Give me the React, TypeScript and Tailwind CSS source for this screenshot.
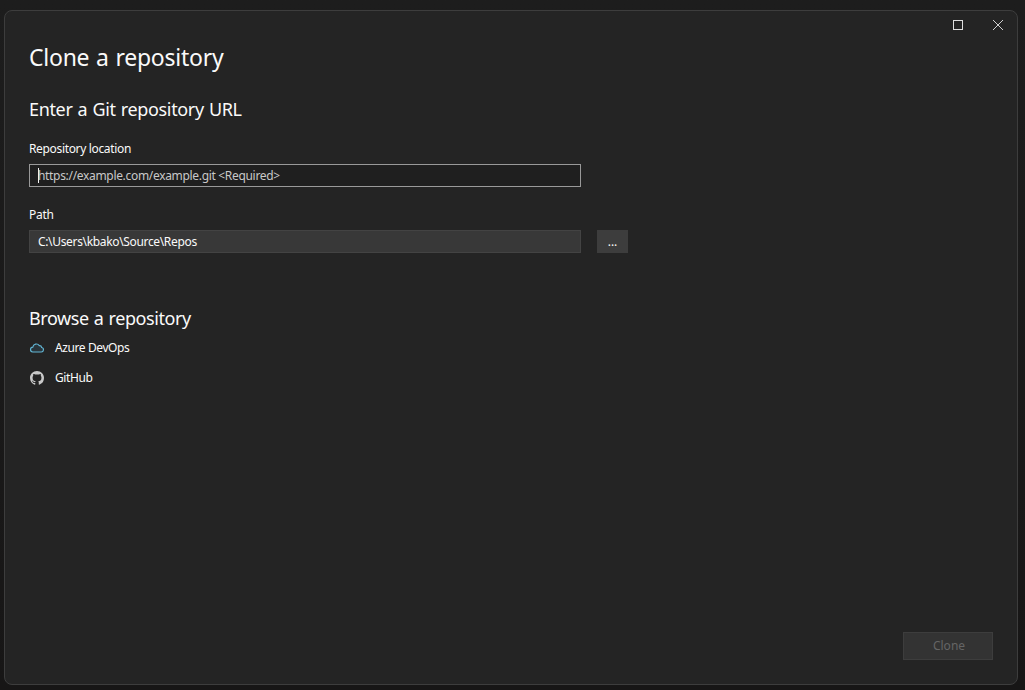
const providers = [
  { key: "azure", label: "Azure DevOps", icon: <CloudIcon /> },
  { key: "github", label: "GitHub", icon: <GitHubIcon /> },
];

function CloudIcon() {
  return (
    <svg width="16" height="16" viewBox="0 0 16 16" fill="none">
      <path
        d="M3.7 12h8.5a2.25 2.25 0 0 0 .5-4.45A2.3 2.3 0 0 0 10.3 5.6 3.6 3.6 0 0 0 3.8 7.1 2.46 2.46 0 0 0 3.7 12Z"
        fill="#29343a"
        stroke="#62b5d3"
        strokeWidth="1.15"
      />
    </svg>
  );
}

function GitHubIcon() {
  return (
    <svg width="16" height="16" viewBox="0 0 16 16" fill="#c8c8c8">
      <g transform="translate(1 1) scale(.875)">
        <path d="M8 0C3.58 0 0 3.58 0 8c0 3.54 2.29 6.53 5.47 7.59.4.07.55-.17.55-.38 0-.19-.01-.82-.01-1.49-2.01.37-2.53-.49-2.69-.94-.09-.23-.48-.94-.82-1.13-.28-.15-.68-.52-.01-.53.63-.01 1.08.58 1.23.82.72 1.21 1.87.87 2.33.66.07-.52.28-.87.51-1.07-1.78-.2-3.64-.89-3.64-3.95 0-.87.31-1.59.82-2.15-.08-.2-.36-1.02.08-2.12 0 0 .67-.21 2.2.82.64-.18 1.32-.27 2-.27s1.36.09 2 .27c1.53-1.04 2.2-.82 2.2-.82.44 1.1.16 1.92.08 2.12.51.56.82 1.27.82 2.15 0 3.07-1.87 3.75-3.65 3.95.29.25.54.73.54 1.48 0 1.07-.01 1.93-.01 2.2 0 .21.15.46.55.38A8.01 8.01 0 0 0 16 8c0-4.42-3.58-8-8-8Z" />
      </g>
    </svg>
  );
}

function WindowControls() {
  return (
    <div className="flex h-7 items-center justify-end gap-[30px] pr-[14px]">
      <button aria-label="Maximize" className="size-[10px] border border-[#dedede]" />
      <button aria-label="Close">
        <svg className="block" width="10" height="10" viewBox="0 0 10 10" stroke="#d0d0d0">
          <path d="M0 0 10 10M10 0 0 10" />
        </svg>
      </button>
    </div>
  );
}

export default function App() {
  return (
    <div className="h-[690px] w-[1025px] overflow-hidden bg-linear-to-b from-[#1d1d1d] to-[#171616] pl-1 pt-[10px] font-['Noto_Sans','Open_Sans',sans-serif] text-xs text-[#fafafa]">
      <div className="flex h-[675px] w-[1014px] flex-col rounded-lg border border-[#3d3d3d] bg-[#242424]">
        <WindowControls />

        <main className="flex flex-1 flex-col pl-6 pr-6">
          <h1 className="mt-[2px] h-8 text-[23px] leading-8 tracking-[-0.25px] [word-spacing:1px]">
            Clone a repository
          </h1>
          <h2 className="mt-6 h-6 text-lg leading-6 tracking-[-0.35px] [word-spacing:0.8px]">
            Enter a Git repository URL
          </h2>

          <label className="mt-5 h-4 leading-4 tracking-[-0.34px]">Repository location</label>
          <div className="mt-[7px] flex h-[23px] w-[552px] items-center border border-[#999] bg-[#1f1f1f] pl-2">
            <span className="h-[15px] w-px bg-[#f5f5f5]" />
            <span className="-ml-px tracking-[-0.32px] text-[#c8c8c8]">
              https://example.com/example.git &lt;Required&gt;
            </span>
          </div>

          <label className="mt-5 h-4 leading-4 tracking-[-0.3px]">Path</label>
          <div className="mt-[7px] flex gap-4">
            <div className="flex h-[23px] w-[552px] items-center border border-[#434343] bg-[#383838] pl-2 tracking-[-0.34px]">
              C:\Users\kbako\Source\Repos
            </div>
            <button className="h-[23px] w-[31px] bg-[#3d3d3d] leading-[23px]">...</button>
          </div>

          <h2 className="mt-[53px] h-6 text-lg leading-6 tracking-[-0.42px] [word-spacing:0.8px]">
            Browse a repository
          </h2>
          <ul className="mt-[10px] flex flex-col gap-[14px]">
            {providers.map((p) => (
              <li key={p.key} className="flex h-4 items-center gap-[10px] leading-4 tracking-[-0.4px]">
                {p.icon}
                <span>{p.label}</span>
              </li>
            ))}
          </ul>

          <button
            disabled
            className="mb-6 mt-auto h-7 w-[90px] self-end border border-[#3d3d3d] bg-[#333] pl-0.5 text-[#656565]"
          >
            Clone
          </button>
        </main>
      </div>
    </div>
  );
}
